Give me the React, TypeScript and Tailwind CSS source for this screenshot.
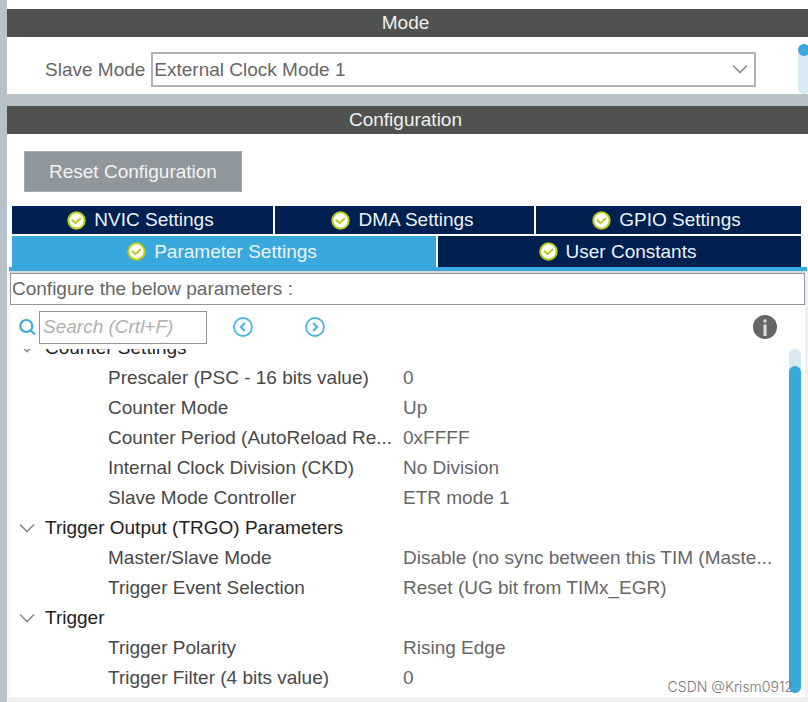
import React from "react";

type Param = { name: string; value: string };
type Group = { title: string; params: Param[] };

const groups: Group[] = [
  {
    title: "Counter Settings",
    params: [
      { name: "Prescaler (PSC - 16 bits value)", value: "0" },
      { name: "Counter Mode", value: "Up" },
      { name: "Counter Period (AutoReload Re...", value: "0xFFFF" },
      { name: "Internal Clock Division (CKD)", value: "No Division" },
      { name: "Slave Mode Controller", value: "ETR mode 1" },
    ],
  },
  {
    title: "Trigger Output (TRGO) Parameters",
    params: [
      { name: "Master/Slave Mode", value: "Disable (no sync between this TIM (Maste..." },
      { name: "Trigger Event Selection", value: "Reset (UG bit from TIMx_EGR)" },
    ],
  },
  {
    title: "Trigger",
    params: [
      { name: "Trigger Polarity", value: "Rising Edge" },
      { name: "Trigger Filter (4 bits value)", value: "0" },
    ],
  },
];

function Chevron() {
  return (
    <svg width="16" height="10" viewBox="0 0 16 10" fill="none" stroke="#8a8a8a" strokeWidth="1.6" aria-hidden="true">
      <path d="M1 1.5 L8 8.5 L15 1.5" />
    </svg>
  );
}

function CheckBadge() {
  return (
    <svg width="19" height="19" viewBox="0 0 19 19" aria-hidden="true">
      <circle cx="9.5" cy="9.5" r="8.2" fill="#fff" stroke="#b9cb1c" strokeWidth="2" />
      <path d="M5 8.8 L8.4 12.2 L14 7" fill="none" stroke="#b9cb1c" strokeWidth="2" />
    </svg>
  );
}

function StepIcon({ d }: { d: string }) {
  return (
    <svg width="20" height="20" viewBox="0 0 20 20" fill="none" stroke="#4db5e3" aria-hidden="true">
      <circle cx="10" cy="10" r="9" strokeWidth="1.8" />
      <path d={d} strokeWidth="2.2" />
    </svg>
  );
}

function TitleBar({ children }: { children: React.ReactNode }) {
  return (
    <h2 className="flex h-7 items-center justify-center bg-[#50524f] pr-1 text-[#f0f0f0]">{children}</h2>
  );
}

function Tab({ label, selected = false }: { label: string; selected?: boolean }) {
  return (
    <button
      type="button"
      role="tab"
      aria-selected={selected}
      className={
        "flex w-full items-center justify-center gap-2 pr-1 text-[#eef2f6] " +
        (selected ? "bg-[#39a9dc]" : "bg-[#002052]")
      }
    >
      <CheckBadge />
      {label}
    </button>
  );
}

export default function App() {
  return (
    <div className="relative min-h-screen bg-[#b7c3c9] pl-[7px] font-['Liberation_Sans',Arial,sans-serif] text-[19px] leading-7 text-[#666]">
      <section className="bg-white pt-[9px]">
        <TitleBar>Mode</TitleBar>
        <div className="flex h-[57px] items-start justify-between pl-[38px]">
          <div className="flex flex-1 items-center gap-[6px] pt-[15px]">
            <label htmlFor="slave-mode" className="whitespace-nowrap">Slave Mode</label>
            <div className="relative mr-[42px] flex-1">
              <select
                id="slave-mode"
                className="block h-[35px] w-full appearance-none rounded-none border-2 border-[#adb4bb] bg-white pl-px"
              >
                <option>External Clock Mode 1</option>
              </select>
              <span className="pointer-events-none absolute top-3 right-2">
                <Chevron />
              </span>
            </div>
          </div>
          <div className="mt-[7px] h-[50px] w-[10px] overflow-hidden">
            <div className="h-full w-3 rounded-full bg-[#d9e8f5]">
              <div className="h-3 w-3 rounded-full bg-[#39a9dc]" />
            </div>
          </div>
        </div>
      </section>

      <section className="mt-3 bg-white">
        <TitleBar>Configuration</TitleBar>
        <div className="px-[17px] pt-[17px] pb-[14px]">
          <button type="button" className="block h-[41px] border border-[#a3acb2] bg-[#8f979d] px-6 text-[#f4f4f4]">
            Reset Configuration
          </button>
        </div>

        <div role="tablist" className="flex flex-col gap-[2px] pr-[7px] pl-[5px]">
          <div className="grid h-7 grid-cols-[261fr_259fr_265fr] gap-[2px]">
            <Tab label="NVIC Settings" />
            <Tab label="DMA Settings" />
            <Tab label="GPIO Settings" />
          </div>
          <div className="grid h-[31px] grid-cols-[424fr_363fr] gap-[2px]">
            <Tab label="Parameter Settings" selected />
            <Tab label="User Constants" />
          </div>
        </div>

        <div className="mr-px ml-[2px] h-[4px] bg-[#39a9dc]" />
        <div className="border-t-2 border-r-[3px] border-b-[5px] border-l-[3px] border-t-[#d3dbe1] border-r-[#f0f1f3] border-b-[#eceef0] border-l-[#f6f7f8]">
          <p className="h-8 border border-[#8f969c] pl-px leading-[30px]">Configure the below parameters :</p>
          <div className="flex h-11 items-center pl-[9px]">
            <label htmlFor="search" aria-label="Search" className="mr-[3px]">
              <svg width="17" height="18" viewBox="0 0 17 18" fill="none" stroke="#39a9dc" strokeWidth="2.2" aria-hidden="true">
                <circle cx="7.3" cy="8" r="6" />
                <path d="M11.5 12.3 L16 16.5" />
              </svg>
            </label>
            <input
              id="search"
              type="text"
              placeholder="Search (Crtl+F)"
              className="h-[33px] w-[168px] border border-[#8f969c] pl-[3px] italic placeholder:text-[#b0b0b0]"
            />
            <button type="button" aria-label="Previous" className="ml-[26px]">
              <StepIcon d="M11.8 6 L8 10 L11.8 14" />
            </button>
            <button type="button" aria-label="Next" className="ml-[52px]">
              <StepIcon d="M8.2 6 L12 10 L8.2 14" />
            </button>
            <button type="button" aria-label="Information" className="mr-7 ml-auto">
              <svg width="24" height="24" viewBox="0 0 24 24" aria-hidden="true">
                <circle cx="12" cy="12" r="12" fill="#666" />
                <path d="M10.5 4.5h3v3h-3z M10.5 9.5h3v11.5h-3z" fill="#ddd" />
              </svg>
            </button>
          </div>

          <div className="flex">
            <div className="min-w-0 flex-1 overflow-hidden pb-1">
              <table className="-mt-4 w-full table-fixed border-collapse text-left whitespace-nowrap">
                <colgroup>
                  <col className="w-[393px]" />
                  <col />
                </colgroup>
                {groups.map((group) => (
                  <tbody key={group.title}>
                    <tr className="h-[30px] text-[#222]">
                      <th colSpan={2} scope="rowgroup" className="p-0 font-normal">
                        <span className="flex items-center gap-[10px] pl-[9px]">
                          <Chevron />
                          {group.title}
                        </span>
                      </th>
                    </tr>
                    {group.params.map((param) => (
                      <tr key={param.name} className="h-[30px]">
                        <th scope="row" className="p-0 pl-[98px] font-normal text-[#484848]">{param.name}</th>
                        <td className="p-0">{param.value}</td>
                      </tr>
                    ))}
                  </tbody>
                ))}
              </table>
            </div>
            <div className="mr-1 mb-1 flex w-3 flex-col rounded-full bg-[#d9e8f5] pt-[17px]">
              <div className="flex-1 rounded-full bg-[#39a9dc]" />
            </div>
          </div>
        </div>
      </section>
      <span className="absolute right-[15px] bottom-[5px] font-['Inter',sans-serif] text-sm leading-5 font-light text-[#777]">
        CSDN @Krism0912
      </span>
    </div>
  );
}
